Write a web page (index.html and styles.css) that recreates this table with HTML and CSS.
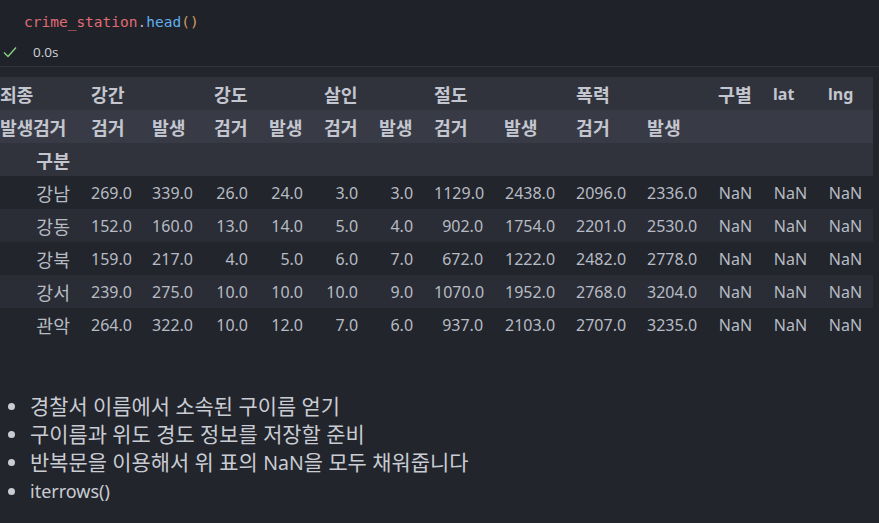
FILE: index.html
```html
<!DOCTYPE html>
<html lang="ko">
<head>
<meta charset="utf-8">
<link rel="stylesheet" href="styles.css">
</head>
<body>
<div class="cell-input">
  <div class="code"><span class="var">crime_station</span><span class="punc">.</span><span class="fn">head</span><span class="br">()</span></div>
  <div class="status">
    <svg class="check" width="14" height="12" viewBox="0 0 14 12"><path d="M1 6.5 L5 10.5 L13 1.5" fill="none" stroke="#89d185" stroke-width="1.4"/></svg>
    <span class="time">0.0s</span>
  </div>
</div>
<div class="output">
  <table class="df">
    <colgroup>
      <col class="w-idx"><col class="w61"><col class="w62"><col class="w55"><col class="w55"><col class="w55"><col class="w55"><col class="w70"><col class="w72"><col class="w71"><col class="w71"><col class="w55"><col class="w55"><col class="w55">
    </colgroup>
    <thead>
      <tr class="h1">
        <th class="lvl">죄종</th>
        <th colspan="2">강간</th>
        <th colspan="2">강도</th>
        <th colspan="2">살인</th>
        <th colspan="2">절도</th>
        <th colspan="2">폭력</th>
        <th>구별</th>
        <th class="lat">lat</th>
        <th class="lat">lng</th>
      </tr>
      <tr class="h2">
        <th class="lvl">발생검거</th>
        <th>검거</th><th>발생</th>
        <th>검거</th><th>발생</th>
        <th>검거</th><th>발생</th>
        <th>검거</th><th>발생</th>
        <th>검거</th><th>발생</th>
        <th></th><th></th><th></th>
      </tr>
      <tr class="h3">
        <th class="idxname">구분</th>
        <th></th><th></th><th></th><th></th><th></th><th></th><th></th><th></th><th></th><th></th><th></th><th></th><th></th>
      </tr>
    </thead>
    <tbody>
      <tr><th>강남</th><td>269.0</td><td>339.0</td><td>26.0</td><td>24.0</td><td>3.0</td><td>3.0</td><td>1129.0</td><td>2438.0</td><td>2096.0</td><td>2336.0</td><td>NaN</td><td>NaN</td><td>NaN</td></tr>
      <tr><th>강동</th><td>152.0</td><td>160.0</td><td>13.0</td><td>14.0</td><td>5.0</td><td>4.0</td><td>902.0</td><td>1754.0</td><td>2201.0</td><td>2530.0</td><td>NaN</td><td>NaN</td><td>NaN</td></tr>
      <tr><th>강북</th><td>159.0</td><td>217.0</td><td>4.0</td><td>5.0</td><td>6.0</td><td>7.0</td><td>672.0</td><td>1222.0</td><td>2482.0</td><td>2778.0</td><td>NaN</td><td>NaN</td><td>NaN</td></tr>
      <tr><th>강서</th><td>239.0</td><td>275.0</td><td>10.0</td><td>10.0</td><td>10.0</td><td>9.0</td><td>1070.0</td><td>1952.0</td><td>2768.0</td><td>3204.0</td><td>NaN</td><td>NaN</td><td>NaN</td></tr>
      <tr><th>관악</th><td>264.0</td><td>322.0</td><td>10.0</td><td>12.0</td><td>7.0</td><td>6.0</td><td>937.0</td><td>2103.0</td><td>2707.0</td><td>3235.0</td><td>NaN</td><td>NaN</td><td>NaN</td></tr>
    </tbody>
  </table>
  <ul class="notes">
    <li>경찰서 이름에서 소속된 구이름 얻기</li>
    <li>구이름과 위도 경도 정보를 저장할 준비</li>
    <li><span>반복문을 이용해서 위 표의 <span class="nan">NaN</span>을 모두 채워줍니다</span></li>
    <li><span class="lat">iterrows()</span></li>
  </ul>
</div>
</body>
</html>
```

FILE: styles.css
```css
html, body {
  margin: 0;
  padding: 0;
  background: #22252c;
}
body {
  width: 879px;
  height: 523px;
  overflow: hidden;
  font-family: "Noto Sans", "Noto Sans CJK KR", sans-serif;
}
.cell-input {
  background: #1f2228;
  height: 67px;
  border-bottom: 1px solid #33363e;
  box-sizing: border-box;
  padding-top: 12px;
}
.code {
  font-family: "DejaVu Sans Mono", "Liberation Mono", monospace;
  font-size: 14.5px;
  line-height: 20px;
  padding-left: 24px;
}
.var { color: #e06c75; }
.punc { color: #abb2bf; }
.fn { color: #61afef; }
.br { color: #d19a66; }
.status {
  display: flex;
  align-items: center;
  height: 20px;
  margin-top: 10px;
  padding-left: 3px;
}
.check { display: block; }
.time {
  margin-left: 16px;
  font-size: 13.5px;
  color: #cfd3da;
  font-family: "Open Sans", "Noto Sans", sans-serif;
}
.output {
  padding-top: 10px;
}
.df {
  border-collapse: collapse;
  table-layout: fixed;
  width: 873px;
  font-size: 16px;
}
.w-idx { width: 81px; }
.w61 { width: 61px; }
.w62 { width: 62px; }
.w55 { width: 55px; }
.w70 { width: 70px; }
.w71 { width: 71px; }
.w72 { width: 72px; }
.df th, .df td {
  height: 33px;
  padding: 0 11px 0 10px;
  white-space: nowrap;
  box-sizing: border-box;
}
.df th {
  font-size: 18.3px;
}
.df th.lat {
  font-size: 16px;
}
.df thead th {
  text-align: left;
  font-weight: 700;
  color: #c3c6cf;
}
.df thead th.lvl {
  padding-left: 0;
  padding-right: 0;
  letter-spacing: -0.3px;
}
.df thead th.idxname {
  text-align: right;
}
.h1, .h3 { background: #30333c; }
.h2 { background: #383b45; }
.df tbody th {
  text-align: right;
  font-weight: 400;
  color: #b7bbc4;
}
.df tbody td {
  text-align: right;
  color: #b7bbc4;
}
.df tbody tr:nth-child(even) { background: #2a2d35; }
.notes {
  list-style: none;
  margin: 51px 0 0 0;
  padding: 0;
  font-size: 20.9px;
  line-height: 28.3px;
  color: #c9ccd3;
}
.notes li {
  display: flex;
  align-items: center;
  height: 28.3px;
}
.notes li::before {
  content: "";
  flex: none;
  width: 7px;
  height: 7px;
  border-radius: 50%;
  background: #c9ccd3;
  margin: 0 15px 0 8px;
}
.notes .lat {
  font-size: 18px;
}
.notes .nan {
  font-size: 19.5px;
}
```
